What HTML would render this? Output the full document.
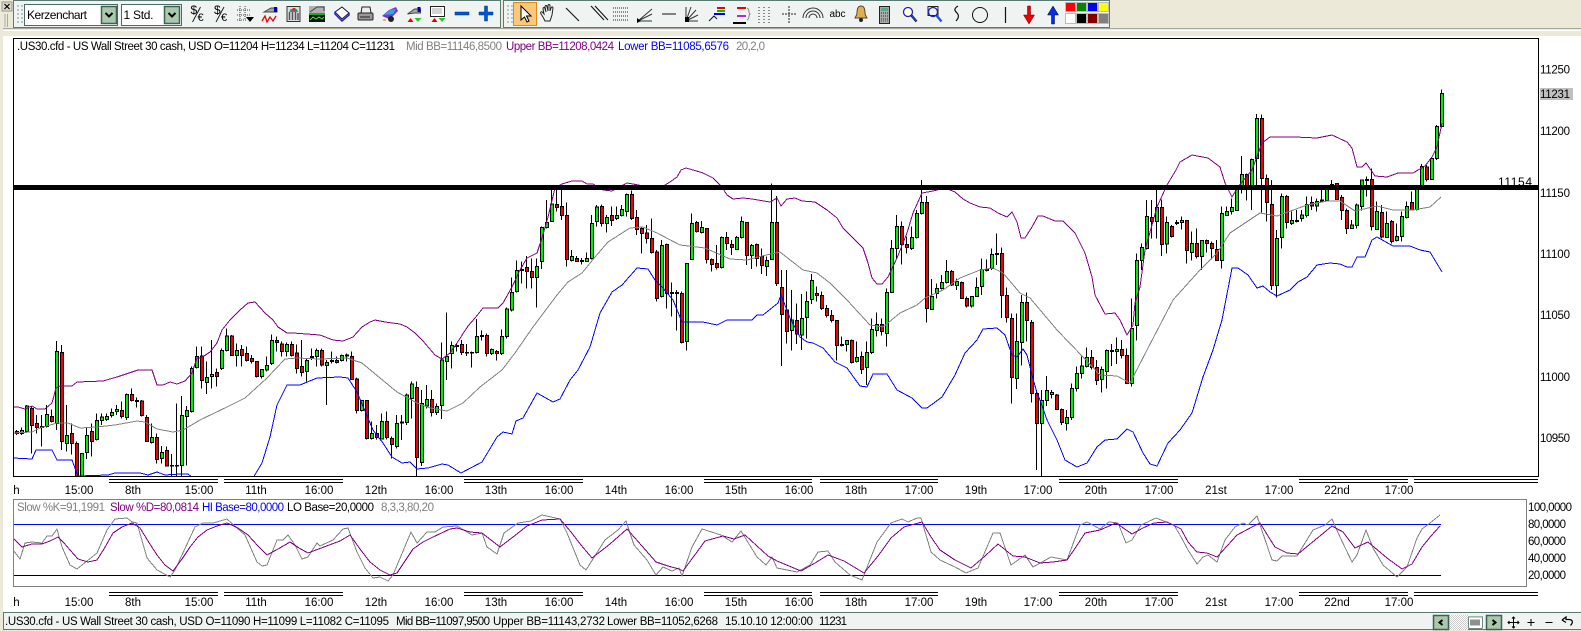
<!DOCTYPE html>
<html><head><meta charset="utf-8"><title>US30 Chart</title>
<style>
html,body{margin:0;padding:0;background:#fff;width:1581px;height:631px;overflow:hidden}
svg{display:block}
text{font-family:"Liberation Sans",Arial,sans-serif;font-size:11.5px;fill:#000}
.w{fill:none;stroke:#000;stroke-width:1;shape-rendering:crispEdges;vector-effect:non-scaling-stroke}
.g,.r,.d{stroke:#000;stroke-width:1;shape-rendering:crispEdges;vector-effect:non-scaling-stroke}
.g{fill:#00ee00}.r{fill:#f40000}.d{fill:#000}
.l{fill:none;stroke-width:1;stroke-linejoin:round;shape-rendering:crispEdges}
.ic{fill:none;stroke:#222;stroke-width:1}
</style></head><body>
<svg width="1581" height="631" viewBox="0 0 1581 631" xmlns="http://www.w3.org/2000/svg">
<defs><clipPath id="c"><rect x="14" y="39" width="1524" height="438"/></clipPath>
<clipPath id="c2"><rect x="14" y="500" width="1512" height="86"/></clipPath>
<pattern id="ht" width="2" height="2" patternUnits="userSpaceOnUse"><rect width="2" height="2" fill="#fff"/><rect width="1" height="1" fill="#ccc"/><rect x="1" y="1" width="1" height="1" fill="#ccc"/></pattern></defs>
<rect width="1581" height="631" fill="#fff"/>
<rect width="1581" height="36" fill="#ece9d8"/>
<rect y="28" width="1581" height="1" fill="#a8a898"/>
<rect y="30" width="1581" height="1" fill="#fff"/>
<rect x="0" width="3" height="631" fill="#ece9d8"/>
<rect y="630" width="1581" height="1" fill="#ece9d8"/>

<!-- toolbars -->
<rect x="2" y="2" width="10" height="9" fill="#dcd8c4" stroke="#999"/>
<path d="M4.5 4l5 5M9.5 4l-5 5" stroke="#000" stroke-width="1.2"/>
<path d="M5 14v13M7.5 14v13" stroke="#aaa" stroke-width="1"/>
<rect x="13.5" y="0.5" width="487" height="27" fill="#eff4f2" stroke="#5b7a73"/>
<rect x="503.5" y="0.5" width="606" height="27" fill="#eff4f2" stroke="#5b7a73"/>
<path d="M17 6h2M21 6h2M17 10h2M21 10h2M17 14h2M21 14h2M17 18h2M21 18h2M17 22h2M21 22h2M507 6h2M511 6h2M507 10h2M511 10h2M507 14h2M511 14h2M507 18h2M511 18h2M507 22h2M511 22h2" stroke="#b9c6c2" stroke-width="2"/>
<rect x="24.5" y="4.5" width="93" height="21" fill="#fff" stroke="#4d6b64"/>
<rect x="101.5" y="6.5" width="15" height="17" fill="#a9c9aa" stroke="#3f5f57" stroke-width="1.5"/>
<path d="M105.500 13l3.500 3.500l3.500-3.500" fill="none" stroke="#000" stroke-width="2"/>
<text x="27" y="19" style="font-size:12px" textLength="60">Kerzenchart</text>
<rect x="121.500" y="4.500" width="60" height="21" fill="#fff" stroke="#4d6b64"/>
<rect x="164.500" y="6.500" width="15" height="17" fill="#a9c9aa" stroke="#3f5f57" stroke-width="1.500"/>
<path d="M168.500 13l3.500 3.500l3.500-3.500" fill="none" stroke="#000" stroke-width="2"/>
<text x="123.500" y="19" style="font-size:12px" textLength="30">1 Std.</text>

<!-- left icons -->
<g transform="translate(197.500 14)"><text x="-7" y="0" style="font-size:12px">$</text><text x="0" y="7" style="font-size:11px">€</text><path d="M-5 8L3-7" stroke="#222" fill="none"/></g>
<g transform="translate(221 14)"><text x="-7" y="0" style="font-size:12px">$</text><text x="0" y="7" style="font-size:11px">€</text><path d="M-5 8L3-7" stroke="#222" fill="none"/></g>
<g transform="translate(245 14)"><path d="M-8-4h13M-8 1h13M-8 6h9M-5-8v16M0-8v13" stroke="#444" stroke-dasharray="1 1" fill="none"/><path d="M1 3h8l-4 5z" fill="#000"/></g>
<g transform="translate(270 14)"><path d="M-6-2l7-4h6v4h-6z" fill="#aaa" stroke="#444"/><rect x="4" y="-7" width="3" height="5" fill="#00a"/><path d="M-8 7l3-5 2 6 3-5 3 4 3-5" fill="none" stroke="#e00" stroke-width="1.300"/></g>
<g transform="translate(293.500 14)"><rect x="-6.500" y="-7.500" width="13" height="15" fill="#ddd" stroke="#333"/><path d="M-4 6V-2M-1 6V-4M2 6V-3M4.500 6V-1" stroke="#556" stroke-width="1.500"/><path d="M-3-5h6l2 3h-9z" fill="#0a8"/><rect x="-1" y="-6" width="3" height="3" fill="#c33"/></g>
<g transform="translate(317 14)"><rect x="-8" y="-8" width="16" height="7" fill="#b0b0b0"/><path d="M-7-2l7-5h7v4" fill="none" stroke="#444"/><rect x="-8" y="1" width="16" height="7" fill="#111"/><path d="M-7 6l3-3 3 2 3-2 3 2 2-2" stroke="#3e3" fill="none"/><rect x="-8" y="-1" width="16" height="2" fill="#2a2"/></g>
<g transform="translate(342 14)"><path d="M-7-2l7-5 7 6-7 6z" fill="#fff" stroke="#114"/><path d="M-7-2l0 2 7 7 7-6v-2" fill="none" stroke="#22c" stroke-width="1.500"/></g>
<g transform="translate(365 14)"><rect x="-7" y="-1" width="15" height="7" rx="1" fill="#999" stroke="#222"/><path d="M-4-1l1-6h8l1 6z" fill="#eee" stroke="#222"/><path d="M-5 3h10" stroke="#222"/></g>
<g transform="translate(390 14)"><path d="M-8 2l7-6 7-3 2 4-5 5-4 3z" fill="#8030d0"/><path d="M-6 1l6-5 6-1-3 5z" fill="#20b0e0"/><circle cx="1" cy="5" r="3" fill="#222"/><path d="M-7 6h3" stroke="#c70"/></g>
<g transform="translate(413.500 14)"><path d="M-6 0l7-5h6v4h-6z" fill="#aaa" stroke="#444"/><rect x="4" y="-7" width="3" height="5" fill="#00a"/><path d="M-6 8l3-4 3 4z" fill="#e00"/><path d="M1 4h7l-3.500 4z" fill="#2c2"/></g>
<g transform="translate(437.500 14)"><rect x="-7" y="-7.500" width="14" height="10" fill="#fff" stroke="#222"/><path d="M-5-5h10M-5-3h10M-5-1h10" stroke="#555" stroke-dasharray="1 1"/><path d="M-6 8l3-4 3 4z" fill="#d00"/><path d="M1 4h7l-3.500 4z" fill="#2c2"/></g>
<rect x="455" y="12" width="14" height="3" fill="#0058d0" stroke="#00307f" stroke-width=".5"/>
<path d="M479 12h5.500V6h3v6h5.500v3h-5.500v6h-3v-6h-5.500z" fill="#0058d0" stroke="#00307f" stroke-width=".5"/>

<!-- second toolbar -->
<rect x="513.500" y="2.500" width="23" height="23" fill="#f9c879" stroke="#e08a1e"/>
<path d="M521 6v14l3.500-3 2.500 5 2-1-2.500-5h4.500z" fill="#fff" stroke="#000"/>
<g class="ic" transform="translate(549 14)"><path d="M-6 3c-2-3-3-4-2-5 1-1 2 1 3 2l-1-5c0-2 2-2 2 0l1 3-1-5c0-2 2-2 2 0l1 4 0-5c0-2 2-2 2 0l0 5 1-3c1-2 2-1 2 0l-1 7-2 6h-5z"/></g>
<path d="M566 8l13 13M591 6l13 14M595 6l13 14" stroke="#111" stroke-width="1.100" fill="none"/>
<path d="M613 8h15M613 12h15M613 16h15M613 20h15" stroke="#222" stroke-dasharray="1 1" fill="none"/>
<path d="M638 21l14-12M638 21l14-7M638 21h14" stroke="#333" fill="none"/><path d="M637 18l4 3-4 2z" fill="#000"/>
<path d="M662 14h14" stroke="#111" fill="none"/>
<path d="M686 21v-14M686 21l5-14M686 21l10-11M686 21l12-6M686 21h12" stroke="#333" fill="none"/><path d="M685 17h4v5h-4z" fill="#000"/>
<path d="M709 21l5-5 3 3" stroke="#111" fill="none"/><path d="M717 8h8" stroke="#e00" stroke-width="2"/><path d="M717 11h8" stroke="#0b0" stroke-width="2"/><path d="M714 14h11" stroke="#00e" stroke-width="2"/>
<path d="M737 8h9" stroke="#e00" stroke-width="2"/><path d="M737 16h9" stroke="#a030e0" stroke-width="2"/><path d="M733 23h13" stroke="#000" stroke-width="2"/><path d="M747 8c3 1 1 5 3 6-2 1 0 5-3 6" fill="none" stroke="#888"/>
<path d="M759 7v16M764 7v16M769 7v16" stroke="#222" stroke-dasharray="1 2" fill="none"/>
<path d="M789 6v17M782 14h14" stroke="#222" stroke-dasharray="2 1" fill="none"/>
<path d="M806 18a7 7 0 0 1 14 0M809 18a4 4 0 0 1 8 0M803 18a10 10 0 0 1 20 0" stroke="#333" fill="none"/>
<text x="829.500" y="17" style="font-size:10px" textLength="16">abc</text>
<path d="M861 6c-3 0-4 3-4 7 0 3-2 4-2 5h12c0-1-2-2-2-5 0-4-1-7-4-7z" fill="#e0b050" stroke="#543"/><circle cx="861" cy="20" r="2" fill="#222"/>
<rect x="879.500" y="6.500" width="10" height="17" fill="#aaa" stroke="#222"/><rect x="881" y="8" width="7" height="3" fill="#5a8"/><path d="M881 13h7M881 16h7M881 19h7" stroke="#234" stroke-dasharray="1 1"/><path d="M881 21h7" stroke="#c22" stroke-dasharray="1 1"/>
<circle cx="908" cy="12" r="4.500" fill="#fff" stroke="#22a" stroke-width="1.300"/><path d="M911.500 15.500l5 6" stroke="#112" stroke-width="2.400"/><path d="M912 16l4.500 5.500" stroke="#25d" stroke-width="1"/>
<rect x="928" y="6.500" width="10" height="9" fill="none" stroke="#222"/><circle cx="933" cy="12" r="4.500" fill="none" stroke="#22a" stroke-width="1.300"/><path d="M936.500 15.500l5 6" stroke="#25d" stroke-width="2.400"/>
<path d="M958 6c-5 3-3 5-1 7s2 5-1 8" fill="none" stroke="#111" stroke-width="1.200"/>
<circle cx="980" cy="15" r="7.500" fill="none" stroke="#111"/>
<path d="M1005.500 7v16" stroke="#111" stroke-width="1.200"/>
<path d="M1027.500 6h3v9h4l-5.500 9-5.500-9h4z" fill="#e00" stroke="#600" stroke-width=".5"/>
<path d="M1051.500 24h3v-9h4l-5.500-9-5.500 9h4z" fill="#0030e0" stroke="#003" stroke-width=".5"/>
<g stroke="#bbb" stroke-width="1"><rect x="1065.500" y="2.500" width="10" height="9" fill="#f00"/><rect x="1076.500" y="2.500" width="10" height="9" fill="#080"/><rect x="1087.500" y="2.500" width="10" height="9" fill="#00f"/><rect x="1098.500" y="2.500" width="10" height="9" fill="#ff0"/><rect x="1065.500" y="13.500" width="10" height="10" fill="#fff"/><rect x="1076.500" y="13.500" width="10" height="10" fill="#000"/><rect x="1087.500" y="13.500" width="10" height="10" fill="#800000"/><rect x="1098.500" y="13.500" width="10" height="10" fill="#808080"/></g>

<!-- chart text -->
<text x="17" y="50" textLength="378">.US30.cfd - US Wall Street 30 cash, USD O=11204 H=11234 L=11204 C=11231</text>
<text x="406" y="50" textLength="96" style="fill:#808080">Mid BB=11146,8500</text>
<text x="506" y="50" textLength="108" style="fill:#800080">Upper BB=11208,0424</text>
<text x="618" y="50" textLength="111" style="fill:#0000ff">Lower BB=11085,6576</text>
<text x="736" y="50" textLength="29" style="fill:#808080">20,2,0</text>

<g clip-path="url(#c)">
<g transform="translate(0 320) scale(1 .33333)">
<path class="w" d="M16.500 330V345M21.500 322V345M26.500 255V338M31.500 260V400M36.500 285V340M41.500 285V380M46.500 255V322M51.500 268V308M56.500 63V330M61.500 75V390M66.500 255V395M71.500 310V403M76.500 365V472M81.500 400V472M86.500 322V417M91.500 310V410M96.500 280V362M101.500 280V315M106.500 280V303M111.500 265V293M116.500 255V285M121.500 245V295M126.500 220V300M131.500 205V245M136.500 232V262M141.500 240V290M146.500 285V365M151.500 310V370M156.500 340V430M161.500 378V430M166.500 380V440M171.500 402V472M176.500 250V472M181.500 228V472M186.500 258V437M191.500 140V278M196.500 80V145M201.500 80V205M206.500 125V222M211.500 60V205M216.500 145V200M221.500 85V150M226.500 25V95M231.500 45V108M236.500 70V140M241.500 75V140M246.500 80V125M251.500 105V130M256.500 124V172M261.500 148V175M266.500 110V155M271.500 43V135M276.500 50V95M281.500 65V110M286.500 68V110M291.500 65V110M296.500 73V160M301.500 60V170M306.500 115V185M311.500 85V120M316.500 85V140M321.500 85V140M326.500 120V255M331.500 95V130M336.500 110V130M341.500 104V125M346.500 100V125M351.500 95V180M356.500 172V280M361.500 240V275M366.500 240V358M371.500 305V358M376.500 315V358M381.500 280V358M386.500 275V358M391.500 350V415M396.500 285V385"/>
<path class="g" d="M20.500 331h3V341h-3zM25.500 258h3V335h-3zM45.500 283h3V319h-3zM55.500 94h3V310h-3zM65.500 347h3V370h-3zM80.500 400h3V472h-3zM85.500 346h3V397h-3zM95.500 301h3V358h-3zM100.500 291h3V301h-3zM105.500 289h3V299h-3zM110.500 277h3V287h-3zM115.500 268h3V275h-3zM125.500 223h3V293h-3zM150.500 352h3V367h-3zM160.500 397h3V415h-3zM180.500 287h3V437h-3zM185.500 271h3V290h-3zM190.500 145h3V274h-3zM195.500 109h3V143h-3zM205.500 172h3V187h-3zM210.500 163h3V170h-3zM220.500 91h3V145h-3zM225.500 48h3V92h-3zM235.500 91h3V107h-3zM260.500 148h3V170h-3zM265.500 136h3V150h-3zM270.500 61h3V131h-3zM285.500 73h3V95h-3zM305.500 121h3V155h-3zM315.500 91h3V109h-3zM325.500 127h3V137h-3zM330.500 121h3V125h-3zM340.500 106h3V122h-3zM360.500 241h3V271h-3zM370.500 340h3V355h-3zM380.500 304h3V357h-3zM395.500 310h3V380h-3z"/>
<path class="r" d="M15.500 334h3V340h-3zM30.500 265h3V317h-3zM35.500 310h3V322h-3zM50.500 289h3V304h-3zM60.500 97h3V365h-3zM70.500 340h3V370h-3zM75.500 370h3V472h-3zM90.500 334h3V365h-3zM120.500 271h3V290h-3zM130.500 223h3V241h-3zM140.500 243h3V287h-3zM145.500 292h3V365h-3zM155.500 352h3V418h-3zM165.500 391h3V438h-3zM200.500 108h3V182h-3zM215.500 157h3V170h-3zM230.500 48h3V106h-3zM240.500 88h3V107h-3zM245.500 100h3V122h-3zM250.500 115h3V125h-3zM255.500 124h3V170h-3zM275.500 61h3V67h-3zM280.500 72h3V95h-3zM290.500 73h3V107h-3zM295.500 99h3V145h-3zM300.500 139h3V157h-3zM320.500 91h3V135h-3zM335.500 121h3V127h-3zM350.500 109h3V178h-3zM355.500 177h3V271h-3zM365.500 241h3V355h-3zM375.500 340h3V352h-3zM385.500 304h3V352h-3zM390.500 355h3V373h-3z"/>
<path class="d" d="M40.500 320h3V323h-3zM135.500 241h3V244h-3zM170.500 436h3V438h-3zM175.500 436h3V438h-3zM310.500 110h3V115h-3zM345.500 105h3V108h-3z"/>
</g>
<g transform="translate(0 340) scale(1 .33333)">
<path class="w" d="M401.500 225V300M406.500 160V255M411.500 125V235M416.500 125V412M421.500 150V378M426.500 135V205M431.500 150V230M436.500 190V225"/>
<path class="g" d="M405.500 165h3V248h-3zM410.500 132h3V175h-3zM420.500 190h3V368h-3zM425.500 178h3V198h-3zM435.500 199h3V217h-3z"/>
<path class="r" d="M415.500 142h3V353h-3zM430.500 178h3V217h-3z"/>
<path class="d" d="M400.500 246h3V249h-3z"/>
</g>
<g transform="translate(0 170) scale(1 .33333)">
<path class="w" d="M441.500 517V747M446.500 427V630M451.500 515V595M456.500 520V545M461.500 510V555M466.500 522V558M471.500 545V592M476.500 447V550M481.500 482V512M486.500 490V560M491.500 535V555M496.500 540V572M501.500 478V555M506.500 413V505M511.500 322V425M516.500 272V367M521.500 275V340M526.500 258V355M531.500 265V355M536.500 265V413M541.500 170V297M546.500 90V175M551.500 58V155M556.500 60V125M561.500 60V150M566.500 97V290M571.500 240V275M576.500 258V275M581.500 264V284M586.500 248V275M591.500 135V268M596.500 105V170M601.500 103V170M606.500 135V188M611.500 110V168M616.500 110V150M621.500 105V140M626.500 70V140M631.500 62V150M636.500 120V195M641.500 170V250M646.500 165V220M651.500 145V250M656.500 240V395M661.500 210V382M666.500 220V415M671.500 338V440M676.500 360V482M681.500 365V520M686.500 280V542M691.500 130V270M696.500 153V187M701.500 153V190M706.500 175V280M711.500 265V305M716.500 225V298M721.500 200V295M726.500 186V240M731.500 210V255M736.500 198V240M741.500 140V205M746.500 157V285M751.500 222V297M756.500 220V290M761.500 235V312M766.500 260V318M771.500 40V270M776.500 78V348M781.500 300V588M786.500 300V520M791.500 360V542M796.500 400V522M801.500 372V540M806.500 365V505M811.500 312V402M816.500 350V395M821.500 365V420M826.500 405V442M831.500 420V458M836.500 450V572M841.500 500V530M846.500 510V545M851.500 508V580M856.500 515V578M861.500 545V612M866.500 515V645M871.500 445V552M876.500 427V500M881.500 445V497M886.500 355V530M891.500 210V368M896.500 135V268M901.500 155V283M906.500 200V250M911.500 170V240M916.500 120V205M921.500 30V133M926.500 78V458M931.500 327V420M936.500 340V385M941.500 315V358M946.500 270V340M951.500 300V348M956.500 325V360M961.500 335V387M966.500 380V412M971.500 378V412M976.500 322V375M981.500 265V375M986.500 268V305M991.500 235V300M996.500 190V285M1001.500 232V444M1006.500 352V458M1011.500 430V700M1016.500 430V657M1021.500 375V587M1026.500 367V515M1031.500 450V698M1036.500 660V900M1041.500 660V922M1046.500 618V708M1051.500 660V685M1056.500 672V720M1061.500 715V765M1066.500 720V782M1071.500 640V750M1076.500 590V665M1081.500 560V626M1086.500 532V592M1091.500 540V598M1096.500 570V645M1101.500 590V668M1106.500 538V655M1111.500 522V588M1116.500 502V582M1121.500 510V565M1126.500 535V642M1131.500 385V650M1136.500 250V512M1141.500 220V300M1146.500 90V238M1151.500 90V205M1156.500 60V205M1161.500 88V258M1166.500 140V250M1171.500 165V202M1176.500 150V165M1181.500 140V178M1186.500 150V280M1191.500 185V272M1196.500 175V265M1201.500 210V300M1206.500 208V248M1211.500 215V268M1216.500 210V273"/>
<path class="g" d="M440.500 570h3V707h-3zM445.500 560h3V575h-3zM450.500 526h3V551h-3zM475.500 499h3V548h-3zM490.500 538h3V551h-3zM500.500 499h3V551h-3zM505.500 417h3V500h-3zM510.500 367h3V420h-3zM515.500 301h3V365h-3zM535.500 289h3V323h-3zM540.500 172h3V275h-3zM545.500 157h3V172h-3zM550.500 102h3V155h-3zM570.500 259h3V272h-3zM585.500 265h3V275h-3zM590.500 160h3V266h-3zM595.500 111h3V155h-3zM605.500 142h3V161h-3zM615.500 136h3V146h-3zM620.500 118h3V137h-3zM625.500 73h3V125h-3zM660.500 226h3V380h-3zM685.500 280h3V515h-3zM690.500 160h3V268h-3zM700.500 172h3V188h-3zM720.500 202h3V292h-3zM735.500 202h3V238h-3zM740.500 154h3V203h-3zM750.500 226h3V257h-3zM765.500 271h3V290h-3zM770.500 157h3V268h-3zM790.500 450h3V482h-3zM800.500 445h3V495h-3zM805.500 394h3V442h-3zM810.500 331h3V388h-3zM845.500 511h3V523h-3zM855.500 562h3V574h-3zM865.500 547h3V592h-3zM870.500 478h3V548h-3zM875.500 463h3V481h-3zM885.500 367h3V490h-3zM890.500 235h3V367h-3zM895.500 169h3V235h-3zM910.500 202h3V235h-3zM915.500 130h3V203h-3zM920.500 97h3V131h-3zM930.500 379h3V418h-3zM935.500 355h3V370h-3zM940.500 337h3V355h-3zM945.500 304h3V338h-3zM955.500 334h3V347h-3zM970.500 379h3V408h-3zM975.500 352h3V379h-3zM980.500 298h3V349h-3zM990.500 254h3V296h-3zM1015.500 514h3V625h-3zM1020.500 398h3V517h-3zM1040.500 691h3V760h-3zM1045.500 661h3V691h-3zM1050.500 667h3V674h-3zM1065.500 742h3V760h-3zM1070.500 656h3V742h-3zM1075.500 610h3V655h-3zM1080.500 588h3V611h-3zM1085.500 562h3V589h-3zM1100.500 598h3V628h-3zM1105.500 541h3V604h-3zM1115.500 538h3V544h-3zM1130.500 475h3V640h-3zM1135.500 271h3V466h-3zM1140.500 232h3V271h-3zM1145.500 139h3V235h-3zM1155.500 112h3V155h-3zM1165.500 157h3V222h-3zM1180.500 151h3V157h-3zM1190.500 220h3V248h-3zM1200.500 211h3V260h-3z"/>
<path class="r" d="M460.500 523h3V548h-3zM485.500 496h3V550h-3zM495.500 544h3V551h-3zM525.500 292h3V305h-3zM530.500 304h3V323h-3zM555.500 103h3V113h-3zM560.500 109h3V137h-3zM565.500 136h3V268h-3zM575.500 265h3V275h-3zM600.500 109h3V161h-3zM610.500 136h3V152h-3zM630.500 73h3V145h-3zM635.500 142h3V178h-3zM640.500 175h3V191h-3zM645.500 189h3V206h-3zM650.500 205h3V248h-3zM655.500 246h3V385h-3zM665.500 223h3V371h-3zM680.500 370h3V518h-3zM695.500 157h3V185h-3zM705.500 175h3V268h-3zM710.500 268h3V283h-3zM715.500 280h3V293h-3zM725.500 202h3V221h-3zM730.500 223h3V233h-3zM745.500 157h3V257h-3zM755.500 223h3V265h-3zM760.500 259h3V286h-3zM775.500 157h3V341h-3zM780.500 352h3V433h-3zM785.500 420h3V485h-3zM795.500 451h3V492h-3zM815.500 370h3V377h-3zM820.500 376h3V416h-3zM825.500 415h3V436h-3zM830.500 436h3V451h-3zM835.500 451h3V526h-3zM850.500 511h3V577h-3zM860.500 559h3V598h-3zM880.500 464h3V484h-3zM900.500 169h3V223h-3zM905.500 224h3V233h-3zM925.500 97h3V415h-3zM950.500 304h3V345h-3zM960.500 337h3V385h-3zM965.500 385h3V408h-3zM1000.500 250h3V376h-3zM1005.500 376h3V443h-3zM1010.500 445h3V623h-3zM1025.500 397h3V451h-3zM1030.500 457h3V670h-3zM1035.500 670h3V760h-3zM1055.500 675h3V718h-3zM1060.500 718h3V757h-3zM1090.500 562h3V592h-3zM1095.500 592h3V632h-3zM1120.500 538h3V557h-3zM1125.500 556h3V640h-3zM1150.500 142h3V155h-3zM1160.500 112h3V223h-3zM1170.500 169h3V199h-3zM1185.500 151h3V241h-3zM1195.500 220h3V260h-3zM1205.500 211h3V220h-3zM1210.500 220h3V235h-3zM1215.500 238h3V271h-3z"/>
<path class="d" d="M455.500 526h3V529h-3zM465.500 547h3V549h-3zM470.500 547h3V549h-3zM480.500 497h3V500h-3zM520.500 298h3V301h-3zM580.500 271h3V274h-3zM670.500 367h3V371h-3zM675.500 367h3V371h-3zM840.500 524h3V527h-3zM985.500 299h3V302h-3zM995.500 250h3V253h-3zM1110.500 541h3V544h-3zM1175.500 157h3V160h-3z"/>
</g>
<g transform="translate(0 80) scale(1 .33333)">
<path class="w" d="M1221.500 380V565M1226.500 380V408M1231.500 355V403M1236.500 315V392M1241.500 228V340M1246.500 280V362M1251.500 235V390M1256.500 102V315M1261.500 103V398M1266.500 283V425M1271.500 300V630M1276.500 450V652M1281.500 340V505M1286.500 345V445M1291.500 395V435M1296.500 390V428M1301.500 390V425M1306.500 350V412M1311.500 350V390M1316.500 355V395M1321.500 320V365M1326.500 315V365M1331.500 300V318M1336.500 310V360M1341.500 345V420M1346.500 385V462M1351.500 420V447M1356.500 370V445M1361.500 298V392M1366.500 290V350M1371.500 265V452M1376.500 365V450M1381.500 375V475M1386.500 395V474M1391.500 420V490M1396.500 430V485M1401.500 395V485M1406.500 365V415M1411.500 335V392M1416.500 325V392M1421.500 252V330M1426.500 255V305M1431.500 232V300M1436.500 135V240M1441.500 28V142"/>
<path class="g" d="M1220.500 400h3V541h-3zM1225.500 395h3V407h-3zM1230.500 382h3V395h-3zM1235.500 320h3V391h-3zM1240.500 283h3V325h-3zM1250.500 239h3V325h-3zM1255.500 115h3V235h-3zM1275.500 475h3V616h-3zM1280.500 349h3V473h-3zM1290.500 421h3V431h-3zM1300.500 405h3V416h-3zM1305.500 373h3V407h-3zM1315.500 364h3V378h-3zM1325.500 320h3V362h-3zM1350.500 435h3V445h-3zM1355.500 375h3V437h-3zM1360.500 300h3V380h-3zM1375.500 394h3V449h-3zM1385.500 430h3V472h-3zM1395.500 469h3V482h-3zM1400.500 409h3V470h-3zM1405.500 379h3V412h-3zM1415.500 326h3V388h-3zM1420.500 259h3V325h-3zM1430.500 235h3V298h-3zM1435.500 139h3V235h-3zM1440.500 40h3V140h-3z"/>
<path class="r" d="M1245.500 283h3V325h-3zM1260.500 115h3V295h-3zM1265.500 295h3V367h-3zM1270.500 373h3V616h-3zM1285.500 349h3V428h-3zM1310.500 367h3V378h-3zM1335.500 311h3V358h-3zM1340.500 352h3V391h-3zM1345.500 391h3V445h-3zM1370.500 298h3V440h-3zM1380.500 397h3V471h-3zM1390.500 424h3V484h-3zM1410.500 367h3V390h-3zM1425.500 261h3V298h-3z"/>
<path class="d" d="M1295.500 421h3V424h-3zM1320.500 360h3V364h-3zM1330.500 313h3V316h-3zM1365.500 298h3V301h-3z"/>
</g>
<polyline class="l" stroke="#808080" points="13,433 32,432 40,428 57,423 68,423 80,428 97,427 115,425 137,421 145,422 157,429 173,432 183,430 200,420 227,407 245,398 267,378 285,359 297,358 320,359 347,358 362,363 380,378 397,392 417,403 430,408 447,411 463,403 480,387 502,370 515,353 533,327 557,295 568,282 582,273 595,257 608,242 630,228 643,227 657,233 680,245 705,248 730,259 747,260 762,256 780,252 803,270 817,273 830,283 847,300 870,325 883,327 900,313 917,305 925,298 943,290 960,278 980,270 993,268 1003,273 1020,293 1030,298 1057,330 1083,357 1100,375 1117,376 1130,383 1147,350 1173,300 1200,270 1217,253 1230,233 1260,213 1277,216 1307,205 1327,201 1340,201 1355,211 1377,206 1393,210 1413,210 1430,207 1441,197"/>
<polyline class="l" stroke="#800080" points="13,407 18,407 25,409 32,406 37,409 45,409 52,403 56,388 60,386 72,386 77,382 103,381 117,377 138,370 152,370 157,385 163,385 170,382 177,384 185,381 192,373 197,358 201,358 210,352 217,343 222,330 230,320 240,310 248,303 255,302 265,313 273,320 278,327 287,333 293,333 320,335 333,340 343,341 353,337 362,327 370,322 375,320 385,322 400,324 407,327 415,333 423,341 435,355 442,359 450,353 457,343 468,326 475,318 483,308 498,308 503,303 512,287 520,270 527,258 537,253 542,238 548,217 555,188 562,184 572,181 582,181 587,184 593,184 603,190 612,191 627,183 633,184 643,186 655,186 660,188 670,182 677,177 681,170 686,168 693,170 703,173 713,178 722,187 727,195 733,199 743,198 752,199 770,202 777,198 781,206 787,199 795,198 802,201 815,202 827,210 837,218 843,228 853,238 863,248 868,263 872,278 877,284 882,284 888,277 897,258 907,233 913,213 922,193 933,191 945,188 955,192 963,199 970,203 980,207 990,208 998,213 1007,217 1012,212 1017,222 1021,238 1025,238 1032,227 1038,216 1043,216 1055,221 1063,221 1075,233 1085,253 1092,277 1095,295 1105,314 1115,313 1120,320 1127,335 1133,325 1135,303 1140,287 1145,250 1157,207 1167,185 1176,170 1180,162 1192,155 1208,158 1220,167 1225,183 1232,197 1238,187 1252,170 1262,143 1270,137 1295,137 1317,138 1332,135 1347,142 1352,148 1357,167 1362,167 1366,163 1375,176 1387,177 1398,173 1413,173 1425,166 1432,157 1437,147 1442,123"/>
<polyline class="l" stroke="#0000ff" points="13,458 32,459 36,450 52,450 57,460 72,460 78,476 108,475 115,473 140,473 148,475 157,472 165,475 180,474 188,474 193,478 253,478 262,463 270,437 277,405 287,385 300,385 317,378 340,377 348,378 357,392 373,430 383,443 392,457 402,463 410,462 417,469 428,468 442,464 448,465 461,473 482,462 497,437 503,432 512,434 516,421 523,418 537,393 553,402 560,399 570,380 578,370 590,347 600,313 612,292 622,285 637,268 648,269 655,280 663,288 673,300 682,322 703,322 717,325 727,320 752,320 757,315 763,315 778,303 781,295 790,318 800,337 807,342 813,343 823,348 835,362 847,368 860,386 867,387 873,374 887,374 897,390 912,398 922,408 927,408 942,397 955,375 965,353 977,340 983,329 997,328 1005,335 1012,355 1017,357 1023,349 1027,355 1032,375 1037,393 1040,400 1047,420 1057,440 1065,460 1077,467 1087,463 1097,447 1105,440 1117,439 1127,429 1133,432 1143,453 1150,464 1157,466 1168,443 1180,430 1192,413 1203,377 1213,350 1222,320 1232,268 1238,268 1248,275 1257,288 1263,286 1270,292 1277,296 1290,290 1298,282 1307,277 1317,265 1330,263 1340,264 1347,267 1352,267 1357,257 1365,257 1372,240 1377,237 1393,246 1410,246 1420,250 1430,252 1442,272"/>
<rect x="14" y="185" width="1524" height="5" fill="#000"/>
</g>
<text x="1498" y="186" style="font-size:12px" textLength="34">11154</text>
<!-- main frame -->
<path d="M13.500 38.500H1538.500V476.500H13.500Z" fill="none" stroke="#000" shape-rendering="crispEdges"/>
<rect x="1540" y="88" width="33" height="12" fill="#c0c0c0"/>
<text x="1540" y="73.500" textLength="30">11250</text><text x="1540" y="98" textLength="30">11231</text><text x="1540" y="135" textLength="30">11200</text><text x="1540" y="197" textLength="30">11150</text><text x="1540" y="258" textLength="30">11100</text><text x="1540" y="319" textLength="30">11050</text><text x="1540" y="381" textLength="30">11000</text><text x="1540" y="442" textLength="30">10950</text>

<!-- time axis double lines -->
<path d="M109 479.500H218M224 479.500H343M464 479.500H583M704 479.500H812M820 479.500H938M1059 479.500H1178M1299 479.500H1408M1414 479.500H1538M109 482.500H218M224 482.500H343M464 482.500H583M704 482.500H812M820 482.500H938M1059 482.500H1178M1299 482.500H1408M1414 482.500H1538M109 592.500H218M224 592.500H343M464 592.500H583M704 592.500H812M820 592.500H938M1059 592.500H1178M1299 592.500H1408M1414 592.500H1538M109 595.500H218M224 595.500H343M464 595.500H583M704 595.500H812M820 595.500H938M1059 595.500H1178M1299 595.500H1408M1414 595.500H1538" stroke="#000" fill="none" shape-rendering="crispEdges"/>
<g text-anchor="middle">
<text x="16.500" y="494">h</text><text x="79" y="494">15:00</text><text x="133" y="494">8th</text><text x="199" y="494">15:00</text><text x="256" y="494">11th</text><text x="319" y="494">16:00</text><text x="376" y="494">12th</text><text x="439" y="494">16:00</text><text x="496" y="494">13th</text><text x="559" y="494">16:00</text><text x="616" y="494">14th</text><text x="679" y="494">16:00</text><text x="736" y="494">15th</text><text x="799" y="494">16:00</text><text x="856" y="494">18th</text><text x="919" y="494">17:00</text><text x="976" y="494">19th</text><text x="1038" y="494">17:00</text><text x="1096" y="494">20th</text><text x="1159" y="494">17:00</text><text x="1216" y="494">21st</text><text x="1279" y="494">17:00</text><text x="1337" y="494">22nd</text><text x="1399" y="494">17:00</text>
<text x="16.500" y="606">h</text><text x="79" y="606">15:00</text><text x="133" y="606">8th</text><text x="199" y="606">15:00</text><text x="256" y="606">11th</text><text x="319" y="606">16:00</text><text x="376" y="606">12th</text><text x="439" y="606">16:00</text><text x="496" y="606">13th</text><text x="559" y="606">16:00</text><text x="616" y="606">14th</text><text x="679" y="606">16:00</text><text x="736" y="606">15th</text><text x="799" y="606">16:00</text><text x="856" y="606">18th</text><text x="919" y="606">17:00</text><text x="976" y="606">19th</text><text x="1038" y="606">17:00</text><text x="1096" y="606">20th</text><text x="1159" y="606">17:00</text><text x="1216" y="606">21st</text><text x="1279" y="606">17:00</text><text x="1337" y="606">22nd</text><text x="1399" y="606">17:00</text>
</g>

<!-- sub window -->
<rect x="13.500" y="499.500" width="1513" height="87" fill="#fff" stroke="#808080"/>
<g clip-path="url(#c2)">
<path d="M14 524.500H1441" stroke="#0000ff" fill="none" shape-rendering="crispEdges"/>
<path d="M14 575.500H1441" stroke="#000" fill="none" shape-rendering="crispEdges"/>
<polyline class="l" stroke="#808080" points="13,550 20,559 25,543 32,542 42,543 47,536 52,536 57,529 62,547 70,565 77,569 97,553 107,530 115,519 127,518 132,522 137,523 147,558 157,570 170,577 175,570 195,527 203,523 213,523 227,519 237,528 245,535 257,562 262,566 267,565 277,540 283,540 288,535 295,545 302,559 308,557 317,543 320,546 333,540 343,529 348,528 357,552 365,568 373,578 380,577 388,581 393,575 411,532 417,543 427,532 435,532 443,527 457,526 472,535 482,533 487,547 497,554 504,533 518,523 531,521 542,515 560,519 567,533 580,565 586,570 605,540 618,530 626,521 634,545 647,560 656,575 663,567 672,571 679,568 682,576 692,547 702,529 721,535 732,542 741,531 757,557 766,565 772,557 777,568 797,572 810,565 818,552 828,551 835,562 850,575 862,580 877,542 891,523 902,519 908,522 917,518 921,518 931,552 940,560 955,567 966,573 978,568 993,533 1000,533 1011,565 1025,555 1033,567 1051,557 1067,560 1080,525 1087,522 1100,529 1109,522 1118,523 1126,543 1132,540 1141,525 1156,518 1174,525 1180,535 1188,550 1197,564 1203,557 1208,555 1217,562 1225,540 1235,527 1243,523 1248,525 1257,516 1272,560 1277,561 1282,556 1297,556 1313,530 1325,525 1332,519 1340,537 1352,562 1357,555 1366,530 1373,548 1383,565 1397,577 1407,567 1417,538 1422,529 1430,523 1440,515"/>
<polyline class="l" stroke="#800080" points="13,538 18,543 22,547 32,544 42,544 50,541 58,537 64,543 70,550 78,559 88,562 97,560 104,549 113,533 122,527 132,523 140,528 148,541 157,555 165,565 173,571 182,559 190,547 198,537 207,530 217,526 227,523 238,528 248,535 258,546 267,555 278,549 290,542 299,548 308,553 324,547 340,541 350,535 360,549 370,562 380,570 390,575 397,573 405,561 413,549 423,542 433,537 450,529 457,528 470,532 482,533 491,540 500,547 513,537 527,526 542,520 560,519 571,532 581,545 592,558 610,544 627,529 642,546 656,562 668,566 679,569 683,571 694,556 705,541 723,536 734,539 745,535 757,546 768,556 777,561 789,566 801,571 815,563 828,555 844,561 854,567 864,573 878,556 891,538 904,527 922,522 931,537 940,550 955,560 971,568 985,556 998,544 1013,556 1025,557 1040,563 1053,562 1067,560 1076,547 1085,533 1100,530 1116,523 1132,534 1143,528 1154,523 1167,522 1181,529 1188,542 1197,552 1207,553 1217,557 1227,546 1237,535 1252,527 1260,523 1268,536 1275,547 1287,553 1298,554 1315,540 1332,526 1343,532 1355,548 1368,542 1387,558 1402,569 1412,564 1422,547 1431,536 1440,526"/>
</g>
<text x="17" y="511" textLength="88" style="fill:#808080">Slow %K=91,1991</text>
<text x="110" y="511" textLength="89" style="fill:#800080">Slow %D=80,0814</text>
<text x="202" y="511" textLength="82" style="fill:#0000ff">HI Base=80,0000</text>
<text x="287" y="511" textLength="87">LO Base=20,0000</text>
<text x="381" y="511" textLength="53" style="fill:#808080">8,3,3,80,20</text>
<text x="1528" y="511" textLength="44">100,0000</text><text x="1528" y="528" textLength="38">80,0000</text><text x="1528" y="545" textLength="38">60,0000</text><text x="1528" y="562" textLength="38">40,0000</text><text x="1528" y="579" textLength="38">20,0000</text>

<!-- status bar -->
<rect x="3.500" y="612.500" width="1578" height="17" fill="#eff4f2" stroke="#5b7a73"/>
<text x="5" y="625" textLength="384">.US30.cfd - US Wall Street 30 cash, USD O=11090 H=11099 L=11082 C=11095</text>
<text x="396" y="625" textLength="94">Mid BB=11097,9500</text>
<text x="493" y="625" textLength="112">Upper BB=11143,2732</text>
<text x="607" y="625" textLength="111">Lower BB=11052,6268</text>
<text x="725" y="625" textLength="88">15.10.10 12:00:00</text>
<text x="819" y="625" textLength="28">11231</text>
<rect x="1449" y="615" width="19" height="15" fill="url(#ht)"/>
<rect x="1433.500" y="615.500" width="15" height="14" fill="#a9c9aa" stroke="#3f5f57" stroke-width="1.500"/>
<path d="M1442.500 620l-3 2.500 3 2.500" fill="none" stroke="#000" stroke-width="2"/>
<rect x="1468.500" y="616.500" width="14" height="12" rx="1" fill="#fff" stroke="#6a8a80"/>
<path d="M1471 619.500v6M1473 619.500v6M1475 619.500v6M1477 619.500v6M1479 619.500v6" stroke="#222"/>
<path d="M1469 617h13" stroke="#a9c9aa" stroke-width="1.500"/>
<rect x="1486.500" y="615.500" width="15" height="14" fill="#a9c9aa" stroke="#3f5f57" stroke-width="1.500"/>
<path d="M1492.500 620l3 2.500-3 2.500" fill="none" stroke="#000" stroke-width="2"/>
<path d="M1513.500 617v11M1508 622.500h11M1512 618.500l1.500-1.500 1.500 1.500M1512 626.500l1.500 1.500 1.500-1.500M1509.500 621l-1.500 1.500 1.500 1.500M1517.500 621l1.500 1.500-1.500 1.500" stroke="#000" fill="none"/>
<path d="M1527.500 622.500h7M1531 619v7M1545.500 622.500h7" stroke="#000" fill="none"/>
<path d="M1562 620l4-3v2.500h3c3 0 4 2 3 4l-1.500 2M1562 620l4 2.500" stroke="#000" fill="none" stroke-width="1.200"/>
</svg>
</body></html>
